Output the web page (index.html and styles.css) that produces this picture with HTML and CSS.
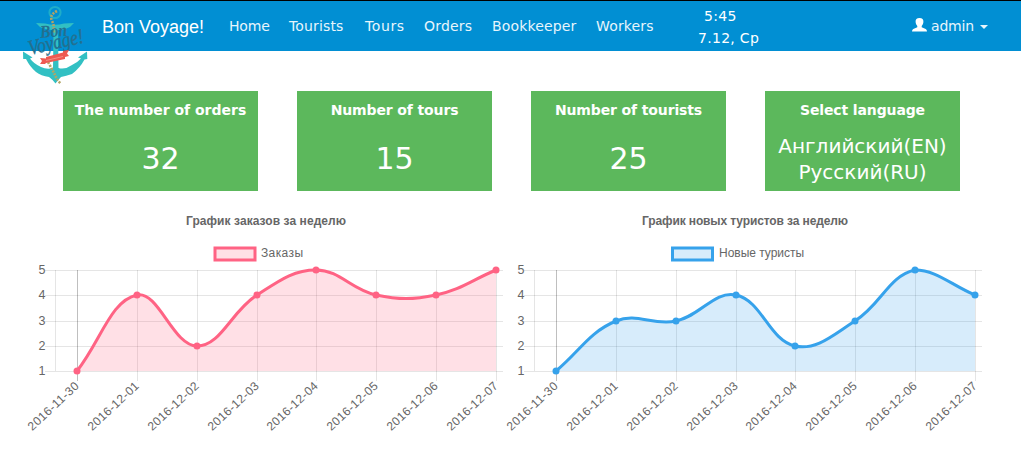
FILE: index.html
```html
<!DOCTYPE html>
<html lang="ru">
<head>
<meta charset="utf-8">
<title>Bon Voyage!</title>
<link rel="stylesheet" href="styles.css">
</head>
<body>
<header class="navbar">
  <a class="logo" href="#">
    <svg width="66" height="82" viewBox="0 0 66 82">
      <g class="anchor">
        <circle cx="32" cy="7.500" r="5.600" fill="none" stroke="#1eadc9" stroke-width="2"/>
        <path d="M13 18 L22 18.500 Q32 21 41 18.500 L51 18 L47 22 Q41 25.500 35 25 L35.500 63 Q42 65 49 60 Q55 57 58 53.500 L55 52.500 L64 46.500 L64.300 54 L61.500 54.500 Q57 63 49 69 Q43 71 38 72 Q35 75 32.500 78.500 Q29 74 26 72 Q18 71 13 67 Q7 62 3 54 L.2 54 L0 46.500 L9.500 52.500 L7 53.500 Q11 59 18 62 Q24 65 30 63 L30.500 25 Q23 25.500 17 22 Z"/>
      </g>
      <path class="rope" d="M34 6 Q26 10 29 16 Q32 21 30 28 M25 57 Q29 64 32 70 Q34 75 38 79"/>
      <text class="logo-text" transform="translate(17.500 33) rotate(-5)" textLength="27" lengthAdjust="spacingAndGlyphs">Bon</text>
      <text class="logo-text large" transform="translate(7 50) rotate(-13)" textLength="56" lengthAdjust="spacingAndGlyphs">Voyage!</text>
      <path class="ribbon" d="M17 53 L23 53.500 L23 52 L40 47.500 L40 46 L46 45 L44 48.500 L46 51 L42 52 L42 54 L23 58 L22 59 L17 59 L19 56 Z"/>
      <path d="M23 55.500 L40 51.500" stroke="#f59a8f" stroke-width=".8"/>
    </svg>
  </a>
  <a class="brand" href="#">Bon Voyage!</a>
  <nav class="menu">
    <a class="home" href="#">Home</a><a href="#">Tourists</a><a class="tours" href="#">Tours</a><a class="orders" href="#">Orders</a><a href="#">Bookkeeper</a><a href="#">Workers</a>
  </nav>
  <div class="clock"><div class="time">5:45</div><div>7.12, Ср</div></div>
  <a class="user" href="#">
    <svg width="15" height="14" viewBox="0 0 15 14"><path fill="#fff" d="M7.500 0 C10.300 0 11.600 1.500 11.400 4 C11.300 6 10.300 7 9.700 8 L9.700 9.300 L13.700 11 Q15 11.800 15 13.500 L0 13.500 Q0 11.800 1.300 11 L5.300 9.300 L5.300 8 C4.700 7 3.700 6 3.600 4 C3.400 1.500 4.700 0 7.500 0Z"/></svg>
    <span>admin</span><i class="caret"></i>
  </a>
</header>
<main>
  <section class="cards">
    <article class="card"><h2>The number of orders</h2><p>32</p></article>
    <article class="card narrow"><h2>Number of tours</h2><p>15</p></article>
    <article class="card narrow"><h2>Number of tourists</h2><p>25</p></article>
    <article class="card narrow"><h2>Select language</h2><div class="langs"><a href="#">Английский(EN)</a><a href="#">Русский(RU)</a></div></article>
  </section>
  <section class="charts">
    <svg class="chart pink" id="orders" width="479" height="240"></svg>
    <svg class="chart blue" id="tourists" width="479" height="240"></svg>
  </section>
</main>
<script src="charts.js"></script>
</body>
</html>
```
FILE: styles.css
```css
* { box-sizing: border-box; }
body { margin: 0; background: #fff; font: 14px/20px "DejaVu Sans", sans-serif; overflow: hidden; }
a { color: inherit; text-decoration: none; }
.navbar { display: flex; height: 51px; background: #018fd3; border-top: 1px solid #000; color: #fff; padding-left: 23px; }
.logo { width: 79px; height: 82px; padding-top: 4px; flex: none; }
.logo svg { display: block; overflow: visible; }
.anchor { fill: #32c0c3; }
.rope { fill: none; stroke: #b3a564; stroke-width: 2.6; stroke-dasharray: 2 1.2; }
.logo-text { font: italic bold 18px "Liberation Serif", serif; fill: #24708f; }
.logo-text.large { font-size: 21px; font-weight: normal; stroke: #24708f; stroke-width: .4; }
.ribbon { fill: #ee5a52; }
.brand { font: 18px/20px "Liberation Sans", sans-serif; padding-top: 16px; width: 127px; flex: none; }
.menu { display: grid; grid-template-columns: 60px 76px 59px 68px 104px 102px; padding-top: 15px; width: 469px; flex: none; color: #e7f5fc; letter-spacing: .15px; }
.menu .home { letter-spacing: -.2px; }
.menu .tours { letter-spacing: .6px; }
.menu .orders { letter-spacing: .2px; }
.clock { width: 62px; flex: none; padding-top: 4px; line-height: 22px; white-space: nowrap; letter-spacing: .3px; }
.clock .time { padding-left: 6px; }
.user { display: flex; margin-left: 151px; padding-top: 15px; color: #e7f5fc; letter-spacing: -.2px; }
.user svg { margin: 2px 4px 0 1px; }
.caret { border: 4px solid transparent; border-top-color: #e7f5fc; border-bottom: 0; margin: 9px 0 0 6px; height: 4px; }
.cards { display: flex; gap: 39px; padding: 40px 0 0 63px; }
.card { width: 195px; height: 100px; background: #5cb85c; color: #fff; text-align: center; padding-top: 9px; }
.card h2 { margin: 0; font-size: 14px; line-height: 20px; white-space: nowrap; }
.narrow h2 { letter-spacing: -.13px; }
.card p { margin: 19px 0 0; font-size: 30px; line-height: 40px; }
.langs { display: flex; flex-direction: column; padding-top: 13px; font-size: 20px; line-height: 26px; white-space: nowrap; }
.charts { display: flex; padding-left: 23px; padding-top: 9px; }
.chart { flex: none; overflow: visible; font: 12px "Liberation Sans", sans-serif; }
.chart text { fill: #666; }
.chart .title { font-weight: bold; }
.chart .ylabel, .chart .xlabel { text-anchor: end; }
.chart .ylabel { font-size: 12.500px; }
.grid { stroke: rgba(0,0,0,.1); shape-rendering: crispEdges; }
.zero { stroke: rgba(0,0,0,.25); shape-rendering: crispEdges; }
.pink { --line: #ff6384; --fill: rgba(255,99,132,.2); }
.blue { --line: #36a2eb; --fill: rgba(54,162,235,.2); }
.area { fill: var(--fill); }
.line { fill: none; stroke: var(--line); stroke-width: 3; }
.key { fill: var(--fill); stroke: var(--line); stroke-width: 3; }
.dot { fill: var(--line); }
```
FILE: charts.js
```js
const xs = [54, 114, 174, 234, 293, 353, 413, 473];
const rows = [171.5, 146.5, 121.5, 95.5, 70.5];
const days = ['2016-11-30', '2016-12-01', '2016-12-02', '2016-12-03', '2016-12-04', '2016-12-05', '2016-12-06', '2016-12-07'];

// Smooth curve whose control points stay inside the plot area.
function curve(points) {
  const clamp = y => Math.min(171, Math.max(70, y));
  const controls = points.map((p, i) => {
    const a = points[i - 1] || p, b = points[i + 1] || p;
    const da = Math.hypot(p[0] - a[0], p[1] - a[1]);
    const db = Math.hypot(b[0] - p[0], b[1] - p[1]);
    const fa = 0.4 * da / (da + db), fb = 0.4 * db / (da + db);
    const dx = b[0] - a[0], dy = b[1] - a[1];
    return [[p[0] - fa * dx, clamp(p[1] - fa * dy)], [p[0] + fb * dx, clamp(p[1] + fb * dy)]];
  });
  let d = 'M' + points[0];
  for (let i = 1; i < points.length; i++) d += ' C' + controls[i - 1][1] + ' ' + controls[i][0] + ' ' + points[i];
  return d;
}

function draw(id, title, titleX, titleWidth, label, keyX, labelWidth, values) {
  const pts = values.map((v, i) => [xs[i], Math.round(rows[v - 1] - 0.5)]);
  const path = curve(pts);
  let s = `<text class="title" x="${titleX}" y="25" textLength="${titleWidth}">${title}</text>`;
  s += `<rect class="key" x="${keyX}" y="48" width="40" height="12"/><text x="${Math.ceil(keyX + 46)}" y="57" textLength="${labelWidth}">${label}</text>`;
  rows.forEach((y, i) => {
    s += `<path class="grid" d="M22 ${y}H480"/><text class="ylabel" x="22.5" y="${y + 3}">${i + 1}</text>`;
  });
  s += '<path class="grid" d="M32.5 70V171"/>';
  xs.forEach((x, i) => {
    s += `<path class="${i ? 'grid' : 'zero'}" d="M${x + 0.5} 70V181"/>`;
    s += `<text class="xlabel" transform="translate(${x} 184) rotate(-43)" y="4" textLength="65">${days[i]}</text>`;
  });
  s += `<path class="area" d="${path} V171 H54Z"/><path class="line" d="${path}"/>`;
  pts.forEach(p => { s += `<circle class="dot" cx="${p[0]}" cy="${p[1]}" r="3.5"/>`; });
  document.getElementById(id).innerHTML = s;
}

draw('orders', 'График заказов за неделю', 163, 160, 'Заказы', 192, 42, [1, 4, 2, 4, 5, 4, 4, 5]);
draw('tourists', 'График новых туристов за неделю', 140, 206, 'Новые туристы', 170.5, 85, [1, 3, 3, 4, 2, 3, 5, 4]);
```
